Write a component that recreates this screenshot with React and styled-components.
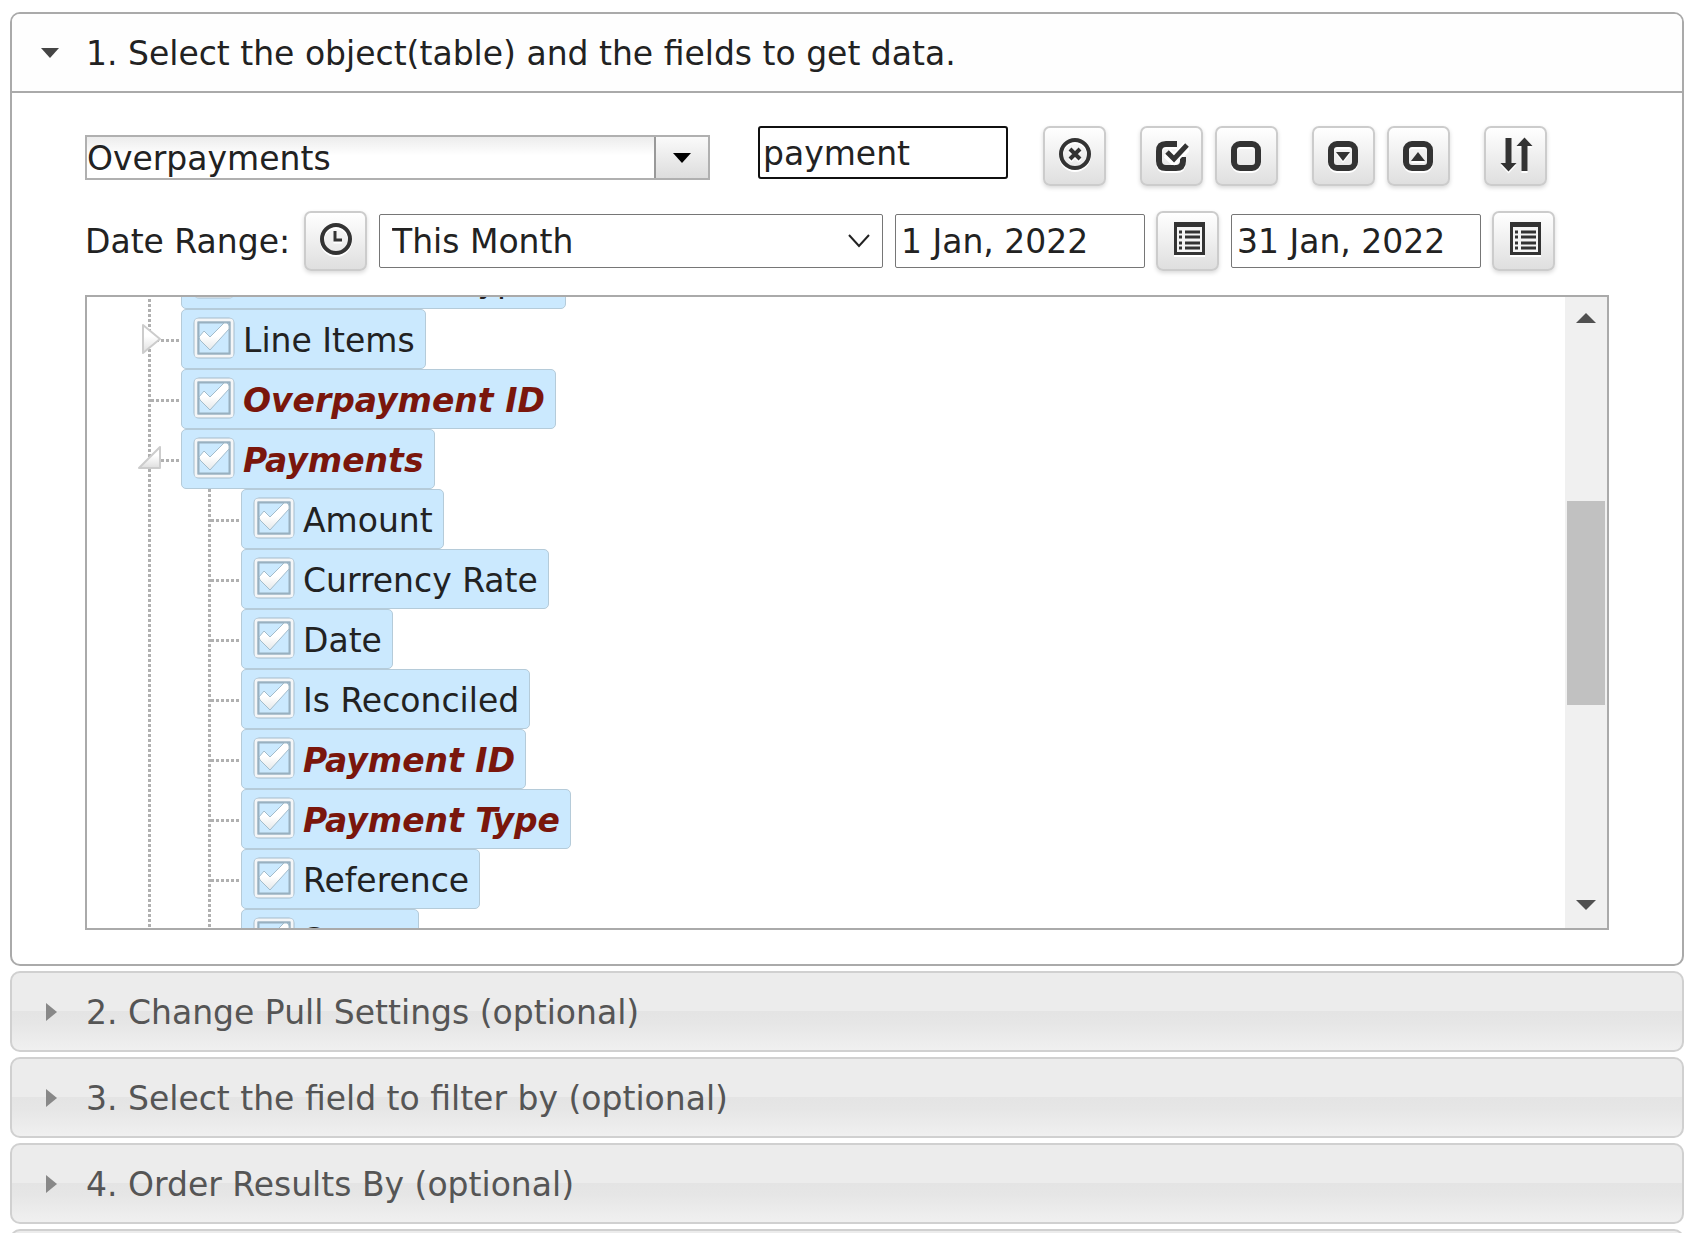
import React, { useEffect, useRef, useState } from "react";
import styled, { createGlobalStyle } from "styled-components";

const GlobalStyle = createGlobalStyle`
  * {
    box-sizing: border-box;
  }

  body {
    margin: 0;
    background: #fff;
    overflow: hidden;
  }

  body,
  button,
  input,
  select {
    font-family: Verdana, "DejaVu Sans", sans-serif;
    font-size: 33px;
    color: #222;
  }
`;

const fields = [
  { name: "Line Amount Types" },
  { name: "Line Items", state: "closed" },
  { name: "Overpayment ID", match: true },
  {
    name: "Payments",
    match: true,
    state: "open",
    children: [
      { name: "Amount" },
      { name: "Currency Rate" },
      { name: "Date" },
      { name: "Is Reconciled" },
      { name: "Payment ID", match: true },
      { name: "Payment Type", match: true },
      { name: "Reference" },
      { name: "Status" },
    ],
  },
];

const sections = [
  "2. Change Pull Settings (optional)",
  "3. Select the field to filter by (optional)",
  "4. Order Results By (optional)",
];

const ClearIcon = () => (
  <Icon viewBox="0 0 34 36">
    <circle cx="17" cy="17" r="14" fill="none" stroke="#333" strokeWidth="4" />
    <path d="M12 12l10 10M22 12l-10 10" stroke="#333" strokeWidth="4" />
  </Icon>
);

const CheckAllIcon = () => (
  <Icon viewBox="0 0 34 36">
    <path
      d="M22 7H11Q4 7 4 14V24Q4 31 11 31H21Q28 31 28 24V20"
      fill="none"
      stroke="#333"
      strokeWidth="6"
    />
    <path d="M12 15l7 7L32 8" fill="none" stroke="#fff" strokeWidth="9" />
    <path d="M12 15l7 7L32 8" fill="none" stroke="#333" strokeWidth="5" />
  </Icon>
);

const BoxIcon = ({ children }) => (
  <Icon viewBox="0 0 34 36">
    <rect x="4" y="7" width="24" height="24" rx="6" fill="none" stroke="#333" strokeWidth="6" />
    {children}
  </Icon>
);

const SortIcon = () => (
  <Icon viewBox="0 0 34 36">
    <path d="M6.500 1h6v25h5l-8 8.500l-8 -8.500h5z" fill="#333" />
    <path d="M22.500 34h6V9h5l-8 -8.500l-8 8.500h5z" fill="#333" />
  </Icon>
);

const ClockIcon = () => (
  <Icon viewBox="0 0 34 36">
    <circle cx="17" cy="17" r="14" fill="none" stroke="#333" strokeWidth="4" />
    <path d="M16 9v9h7" fill="none" stroke="#333" strokeWidth="3" />
  </Icon>
);

const CalendarIcon = () => (
  <Icon viewBox="0 0 34 36">
    <path d="M3 0h31v33H3z" fill="#333" />
    <path d="M6 5h25v25H6z" fill="#f5f5f5" />
    <path
      d="M8 10h3M14 10h15M8 15h3M14 15h15M8 21h3M14 21h15M8 26h3M14 26h15"
      stroke="#333"
      strokeWidth="3"
    />
  </Icon>
);

const CheckMark = () => (
  <svg width="42" height="42" viewBox="0 0 42 42" aria-hidden="true">
    <defs>
      <linearGradient id="tick" x1="0" y1="0" x2="0" y2="1">
        <stop offset="0.5" stopColor="#fff" />
        <stop offset="1" stopColor="#e4e8ea" />
      </linearGradient>
    </defs>
    <rect x="3" y="3" width="36" height="36" rx="3" fill="none" stroke="#a6bccb" strokeWidth="5" />
    <rect x="3" y="3" width="36" height="36" rx="2" fill="none" stroke="#f4f6f8" strokeWidth="3" />
    <rect x="5.500" y="5.500" width="31" height="31" fill="none" stroke="#98b0c0" strokeWidth="2" />
    <path
      d="M6 20L11 14L17 20L31 6Q37 5 36 12L17 33L7 23Z"
      fill="url(#tick)"
      stroke="#a3bccb"
      strokeWidth="1"
    />
  </svg>
);

const TreeArrow = ({ open }) => (
  <svg width="26" height="32" viewBox="0 0 26 32" aria-hidden="true">
    <defs>
      <linearGradient id="arrow" x1="0" y1="0" x2="0" y2="1">
        <stop offset="0.4" stopColor="#fff" />
        <stop offset="1" stopColor="#dedede" />
      </linearGradient>
    </defs>
    <path
      d={open ? "M1 25L22 4V25Z" : "M5 2L22 16L5 30Z"}
      fill="url(#arrow)"
      stroke="#ccc"
      strokeWidth="2"
      strokeLinejoin="round"
    />
  </svg>
);

const TreeNode = ({ node, depth = 0 }) => {
  const [checked, setChecked] = useState(true);

  return (
    <li>
      <NodeRow>
        {depth > 0 && <Guide />}
        <Guide $branch>
          {node.state && (
            <Toggle type="button" aria-label={`Toggle ${node.name}`}>
              <TreeArrow open={node.state === "open"} />
            </Toggle>
          )}
        </Guide>
        <NodeLabel $match={node.match}>
          <HiddenCheck
            type="checkbox"
            checked={checked}
            onChange={() => setChecked(!checked)}
          />
          <CheckMark />
          <span>{node.name}</span>
        </NodeLabel>
      </NodeRow>

      {node.children && (
        <Tree>
          {node.children.map((child) => (
            <TreeNode key={child.name} node={child} depth={depth + 1} />
          ))}
        </Tree>
      )}
    </li>
  );
};

const App = () => {
  const [search, setSearch] = useState("payment");
  const [from, setFrom] = useState("1 Jan, 2022");
  const [to, setTo] = useState("31 Jan, 2022");
  const treeRef = useRef(null);

  useEffect(() => {
    treeRef.current.scrollTop = 48;
  }, []);

  return (
    <Page>
      <GlobalStyle />

      <OpenSection>
        <OpenHeader type="button" aria-expanded="true">
          <Marker viewBox="0 0 18 18">
            <path d="M0 4H18L9 14Z" fill="#454545" />
          </Marker>
          1. Select the object(table) and the fields to get data.
        </OpenHeader>

        <Panel>
          {/* ========= Object and field search ========= */}
          <ObjectRow>
            <Combo>
              <ComboInput aria-label="Object" defaultValue="Overpayments" />
              <ComboButton type="button" aria-label="Show objects">
                <svg width="18" height="10" viewBox="0 0 18 10" aria-hidden="true">
                  <path d="M0 0H18L9 10Z" fill="#000" />
                </svg>
              </ComboButton>
            </Combo>
            <SearchInput
              aria-label="Search fields"
              value={search}
              onChange={(e) => setSearch(e.target.value)}
            />
            <Tools>
              <IconButton type="button" aria-label="Clear search">
                <ClearIcon />
              </IconButton>
              <ToolGroup>
                <IconButton type="button" aria-label="Select all">
                  <CheckAllIcon />
                </IconButton>
                <IconButton type="button" aria-label="Select none">
                  <BoxIcon />
                </IconButton>
              </ToolGroup>
              <ToolGroup>
                <IconButton type="button" aria-label="Expand all">
                  <BoxIcon>
                    <path d="M9 15H23L16 24Z" fill="#333" />
                  </BoxIcon>
                </IconButton>
                <IconButton type="button" aria-label="Collapse all">
                  <BoxIcon>
                    <path d="M9 24H23L16 15Z" fill="#333" />
                  </BoxIcon>
                </IconButton>
              </ToolGroup>
              <IconButton type="button" aria-label="Sort fields">
                <SortIcon />
              </IconButton>
            </Tools>
          </ObjectRow>

          {/* ========= Date range ========= */}
          <DateRow>
            <DateLabel htmlFor="range">Date Range:</DateLabel>
            <IconButton type="button" aria-label="Date presets">
              <ClockIcon />
            </IconButton>
            <SelectBox>
              <RangeSelect id="range" defaultValue="This Month">
                <option>This Month</option>
                <option>Last Month</option>
                <option>This Year</option>
              </RangeSelect>
              <Chevron viewBox="0 0 22 14">
                <path d="M1 1L11 12L21 1" fill="none" stroke="#222" strokeWidth="2" />
              </Chevron>
            </SelectBox>
            <DateField>
              <DateInput
                aria-label="From"
                value={from}
                onChange={(e) => setFrom(e.target.value)}
              />
              <IconButton type="button" aria-label="Pick start date">
                <CalendarIcon />
              </IconButton>
            </DateField>
            <DateField>
              <DateInput
                aria-label="To"
                value={to}
                onChange={(e) => setTo(e.target.value)}
              />
              <IconButton type="button" aria-label="Pick end date">
                <CalendarIcon />
              </IconButton>
            </DateField>
          </DateRow>

          {/* ========= Field tree ========= */}
          <TreeBox>
            <TreeScroll ref={treeRef}>
              <Tree>
                {fields.map((node) => (
                  <TreeNode key={node.name} node={node} />
                ))}
              </Tree>
            </TreeScroll>
            <ScrollBar>
              <ScrollButton type="button" aria-label="Scroll up">
                <svg width="20" height="10" viewBox="0 0 20 10" aria-hidden="true">
                  <path d="M0 10L10 0L20 10Z" fill="#505050" />
                </svg>
              </ScrollButton>
              <Track>
                <Thumb />
              </Track>
              <ScrollButton type="button" aria-label="Scroll down">
                <svg width="20" height="10" viewBox="0 0 20 10" aria-hidden="true">
                  <path d="M0 0L10 10L20 0Z" fill="#505050" />
                </svg>
              </ScrollButton>
            </ScrollBar>
          </TreeBox>
        </Panel>
      </OpenSection>

      {sections.map((title) => (
        <SectionHeader key={title} type="button" aria-expanded="false">
          <Marker viewBox="0 0 18 18">
            <path d="M5 0L16 9L5 18Z" fill="#888" />
          </Marker>
          {title}
        </SectionHeader>
      ))}
      <SectionHeader type="button" aria-label="Next section" />
    </Page>
  );
};

const Page = styled.main`
  display: flex;
  flex-direction: column;
  gap: 5px;
  height: 100vh;
  padding: 12px 12px 0 10px;
  overflow: hidden;
`;

const OpenSection = styled.section`
  flex-shrink: 0;
  border: 2px solid #aaa;
  border-radius: 10px;
`;

const OpenHeader = styled.button`
  display: flex;
  align-items: center;
  gap: 27px;
  width: 100%;
  height: 79px;
  padding: 2px 29px 0;
  border: 0;
  border-bottom: 2px solid #aaa;
  border-radius: 8px 8px 0 0;
  background: #fefefe;
  text-align: left;
`;

const SectionHeader = styled.button`
  display: flex;
  align-items: center;
  flex-shrink: 0;
  gap: 27px;
  height: 81px;
  padding: 2px 29px 0;
  border: 2px solid #d0d0d0;
  border-radius: 10px;
  background: linear-gradient(#ececec 49%, #e4e4e4 50%, #e6e6e6 65%, #f0f0f0);
  color: #555;
  text-align: left;
`;

const Marker = styled.svg`
  flex-shrink: 0;
  width: 18px;
  height: 18px;
  margin-bottom: 2px;
`;

const Panel = styled.div`
  padding: 33px 73px 34px;
`;

const ObjectRow = styled.div`
  display: flex;
  align-items: flex-start;
`;

const Combo = styled.div`
  display: flex;
  width: 625px;
  height: 45px;
  margin: 9px 48px 0 0;
  border: 2px solid #b0b0b0;
`;

const ComboInput = styled.input`
  flex: 1;
  min-width: 0;
  padding: 2px 0 0;
  border: 0;
  background: linear-gradient(#ececec, #fff 45%);
`;

const ComboButton = styled.button`
  display: flex;
  align-items: center;
  justify-content: center;
  width: 54px;
  padding: 0;
  border: 0;
  border-left: 2px solid #999;
  background: linear-gradient(#fafafa, #ddd);
`;

const SearchInput = styled.input`
  width: 250px;
  height: 53px;
  padding: 2px 3px 0;
  border: 2px solid #101010;
  border-radius: 3px;
  outline: 0;
`;

const Tools = styled.div`
  display: flex;
  gap: 34px;
  margin-left: 35px;
`;

const ToolGroup = styled.div`
  display: flex;
  gap: 12px;
`;

const IconButton = styled.button`
  display: flex;
  align-items: center;
  justify-content: center;
  flex-shrink: 0;
  width: 63px;
  height: 60px;
  padding: 0 0 2px;
  border: 2px solid #ccc;
  border-radius: 7px;
  background: linear-gradient(#fff, #dfdfdf);
  box-shadow: 0 2px 4px rgba(0, 0, 0, 0.15);
`;

const Icon = styled.svg`
  width: 34px;
  height: 36px;
  filter: drop-shadow(0 2px 0 #fff);
`;

const DateRow = styled.div`
  display: flex;
  align-items: center;
  gap: 12px;
  margin: 25px 0 24px;
`;

const DateLabel = styled.label`
  width: 207px;
  white-space: nowrap;
`;

const SelectBox = styled.div`
  display: grid;
  width: 504px;
`;

const RangeSelect = styled.select`
  grid-area: 1 / 1;
  height: 54px;
  padding: 0 12px;
  border: 1px solid #767676;
  border-radius: 2px;
  background: #fff;
  appearance: none;
`;

const Chevron = styled.svg`
  grid-area: 1 / 1;
  align-self: center;
  justify-self: end;
  width: 22px;
  height: 14px;
  margin-right: 13px;
  pointer-events: none;
`;

const DateField = styled.div`
  display: flex;
  align-items: center;
  gap: 11px;
`;

const DateInput = styled.input`
  width: 250px;
  height: 54px;
  padding: 0 5px;
  border: 1px solid #767676;
  border-radius: 2px;
`;

const TreeBox = styled.div`
  display: flex;
  height: 635px;
  border: 2px solid #aaa;
`;

const TreeScroll = styled.div`
  flex: 1;
  overflow-y: auto;
  padding-left: 34px;
  scrollbar-width: none;
`;

const Tree = styled.ul`
  margin: 0;
  padding: 0;
  list-style: none;
`;

const NodeRow = styled.div`
  position: relative;
  display: flex;
  height: 60px;
`;

const dots = "#b0b0b0 0 3px, transparent 3px 5px";

const Guide = styled.span`
  display: flex;
  align-items: center;
  justify-content: center;
  flex-shrink: 0;
  width: 60px;
  background-image: repeating-linear-gradient(${dots}),
    repeating-linear-gradient(to right, ${dots});
  background-position: 27px 0, 30px 30px;
  background-size: 3px 60px, ${(props) => (props.$branch ? "30px 3px" : "0 0")};
  background-repeat: no-repeat;
`;

const Toggle = styled.button`
  display: flex;
  padding: 0;
  border: 0;
  background: none;
`;

const NodeLabel = styled.label`
  display: flex;
  align-items: center;
  gap: 8px;
  padding: 2px 10px 0 11px;
  border: 1px solid #b5cbd9;
  border-radius: 5px;
  background: #cbe9fe;
  white-space: nowrap;
  color: ${(props) => (props.$match ? "#7a160c" : "#222")};
  font-weight: ${(props) => (props.$match ? 700 : 400)};
  font-style: ${(props) => (props.$match ? "italic" : "normal")};

  svg {
    margin-bottom: 4px;
  }
`;

const HiddenCheck = styled.input`
  position: absolute;
  opacity: 0;
  pointer-events: none;
`;

const ScrollBar = styled.div`
  display: flex;
  flex-direction: column;
  width: 42px;
  padding-bottom: 2px;
  background: #f0f0f0;
`;

const ScrollButton = styled.button`
  display: flex;
  align-items: center;
  justify-content: center;
  height: 42px;
  padding: 0;
  border: 0;
  background: none;
`;

const Track = styled.div`
  flex: 1;
  padding: 162px 2px 0;
`;

const Thumb = styled.div`
  height: 204px;
  background: #c1c1c1;
`;

export default App;
